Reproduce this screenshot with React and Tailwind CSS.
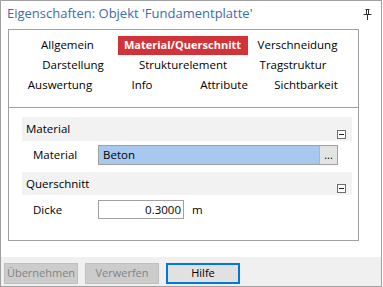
import React from 'react';

function Pin() {
  return (
    <svg width="9" height="11" viewBox="0 0 9 11" className="text-[#333]">
      <path d="M2.5 0.5h4M3.5 0.5v5M5.5 0.5v5M0.5 5.5h8M4.5 6v5" stroke="currentColor" strokeWidth="1" fill="none" />
    </svg>
  );
}

function Collapse() {
  return (
    <div className="w-[9px] h-[9px] border border-[#6d6d6d] bg-white flex items-center justify-center self-end mb-[2px]">
      <div className="w-[5px] h-[1px] bg-[#222]" />
    </div>
  );
}

function GroupHeader({ title, h }) {
  return (
    <div className={`${h} bg-[#f2f2f2] flex justify-between pl-[4px] pr-[6px]`}>
      <span className="self-center">{title}</span>
      <Collapse />
    </div>
  );
}

function Tab({ label, active, w }) {
  return (
    <div className={`${w} h-[20px] flex items-center justify-center shrink-0`}>
      {active ? (
        <span className="shrink-0 w-[130px] h-[19px] bg-[#d13438] text-white font-bold text-[11px] flex items-center justify-center">
          {label}
        </span>
      ) : (
        <span className="whitespace-nowrap">{label}</span>
      )}
    </div>
  );
}

export default function App() {
  const rows = [
    { pl: 'pl-[1px]', w: 'w-[115px]', tabs: ['Allgemein', 'Material/Querschnitt', 'Verschneidung'] },
    { pl: 'pl-[9px]', w: 'w-[110px]', tabs: ['Darstellung', 'Strukturelement', 'Tragstruktur'] },
    { pl: 'pl-[10px]', w: 'w-[82px]', tabs: ['Auswertung', 'Info', 'Attribute', 'Sichtbarkeit'] },
  ];

  return (
    <div className="w-[382px] h-[287px] border border-[#a0a0a0] bg-white flex flex-col font-['Open_Sans',sans-serif] text-[11.5px] text-black">
      <div className="h-[26px] flex items-center justify-between pl-[6px] pr-[9px]">
        <span className="text-[13px] text-[#3d6bab] whitespace-nowrap">Eigenschaften: Objekt 'Fundamentplatte'</span>
        <Pin />
      </div>

      <div className="mt-[2px] ml-[7px] w-[351px] h-[212px] border border-[#a0a0a0] flex flex-col">
        <div className="h-[78px] border-b border-[#a0a0a0] pt-[5px]">
          {rows.map((row, i) => (
            <div key={i} className={`flex ${row.pl}`}>
              {row.tabs.map(t => (
                <Tab key={t} label={t} w={row.w} active={t === 'Material/Querschnitt'} />
              ))}
            </div>
          ))}
        </div>

        <div className="pl-[13px] pr-[6px] pt-[9px] flex flex-col">
          <GroupHeader title="Material" h="h-[24px]" />
          <div className="mt-[4px] h-[20px] flex items-center">
            <span className="w-[76px] pl-[11px]">Material</span>
            <div className="w-[240px] h-[20px] border border-[#a0a0a0] bg-[#a8c9ef] flex">
              <span className="flex-1 pl-[4px] leading-[18px]">Beton</span>
              <span className="w-[18px] border-l border-[#b4b4b4] bg-[#e3e3e3] text-[11px] leading-[18px] text-center">...</span>
            </div>
          </div>

          <div className="mt-[7px]">
            <GroupHeader title="Querschnitt" h="h-[23px]" />
          </div>
          <div className="mt-[5px] h-[19px] flex items-center">
            <span className="w-[76px] pl-[11px]">Dicke</span>
            <div className="w-[86px] h-[19px] border border-[#a0a0a0] bg-white text-right pr-[2px] leading-[17px]">0.3000</div>
            <span className="ml-[8px]">m</span>
          </div>
        </div>
      </div>

      <div className="flex-1" />

      <div className="h-[29px] bg-[#f0f0f0] flex items-start pt-[6px] pl-[3px] gap-[7px] text-[11px]">
        <div className="w-[74px] h-[21px] bg-[#cccccc] border border-[#bfbfbf] text-[#838383] flex items-center justify-center">Übernehmen</div>
        <div className="w-[74px] h-[21px] bg-[#cccccc] border border-[#bfbfbf] text-[#838383] flex items-center justify-center">Verwerfen</div>
        <div className="w-[74px] h-[21px] bg-[#e1e1e1] border-2 border-[#0078d7] flex items-center justify-center">Hilfe</div>
      </div>
    </div>
  );
}
